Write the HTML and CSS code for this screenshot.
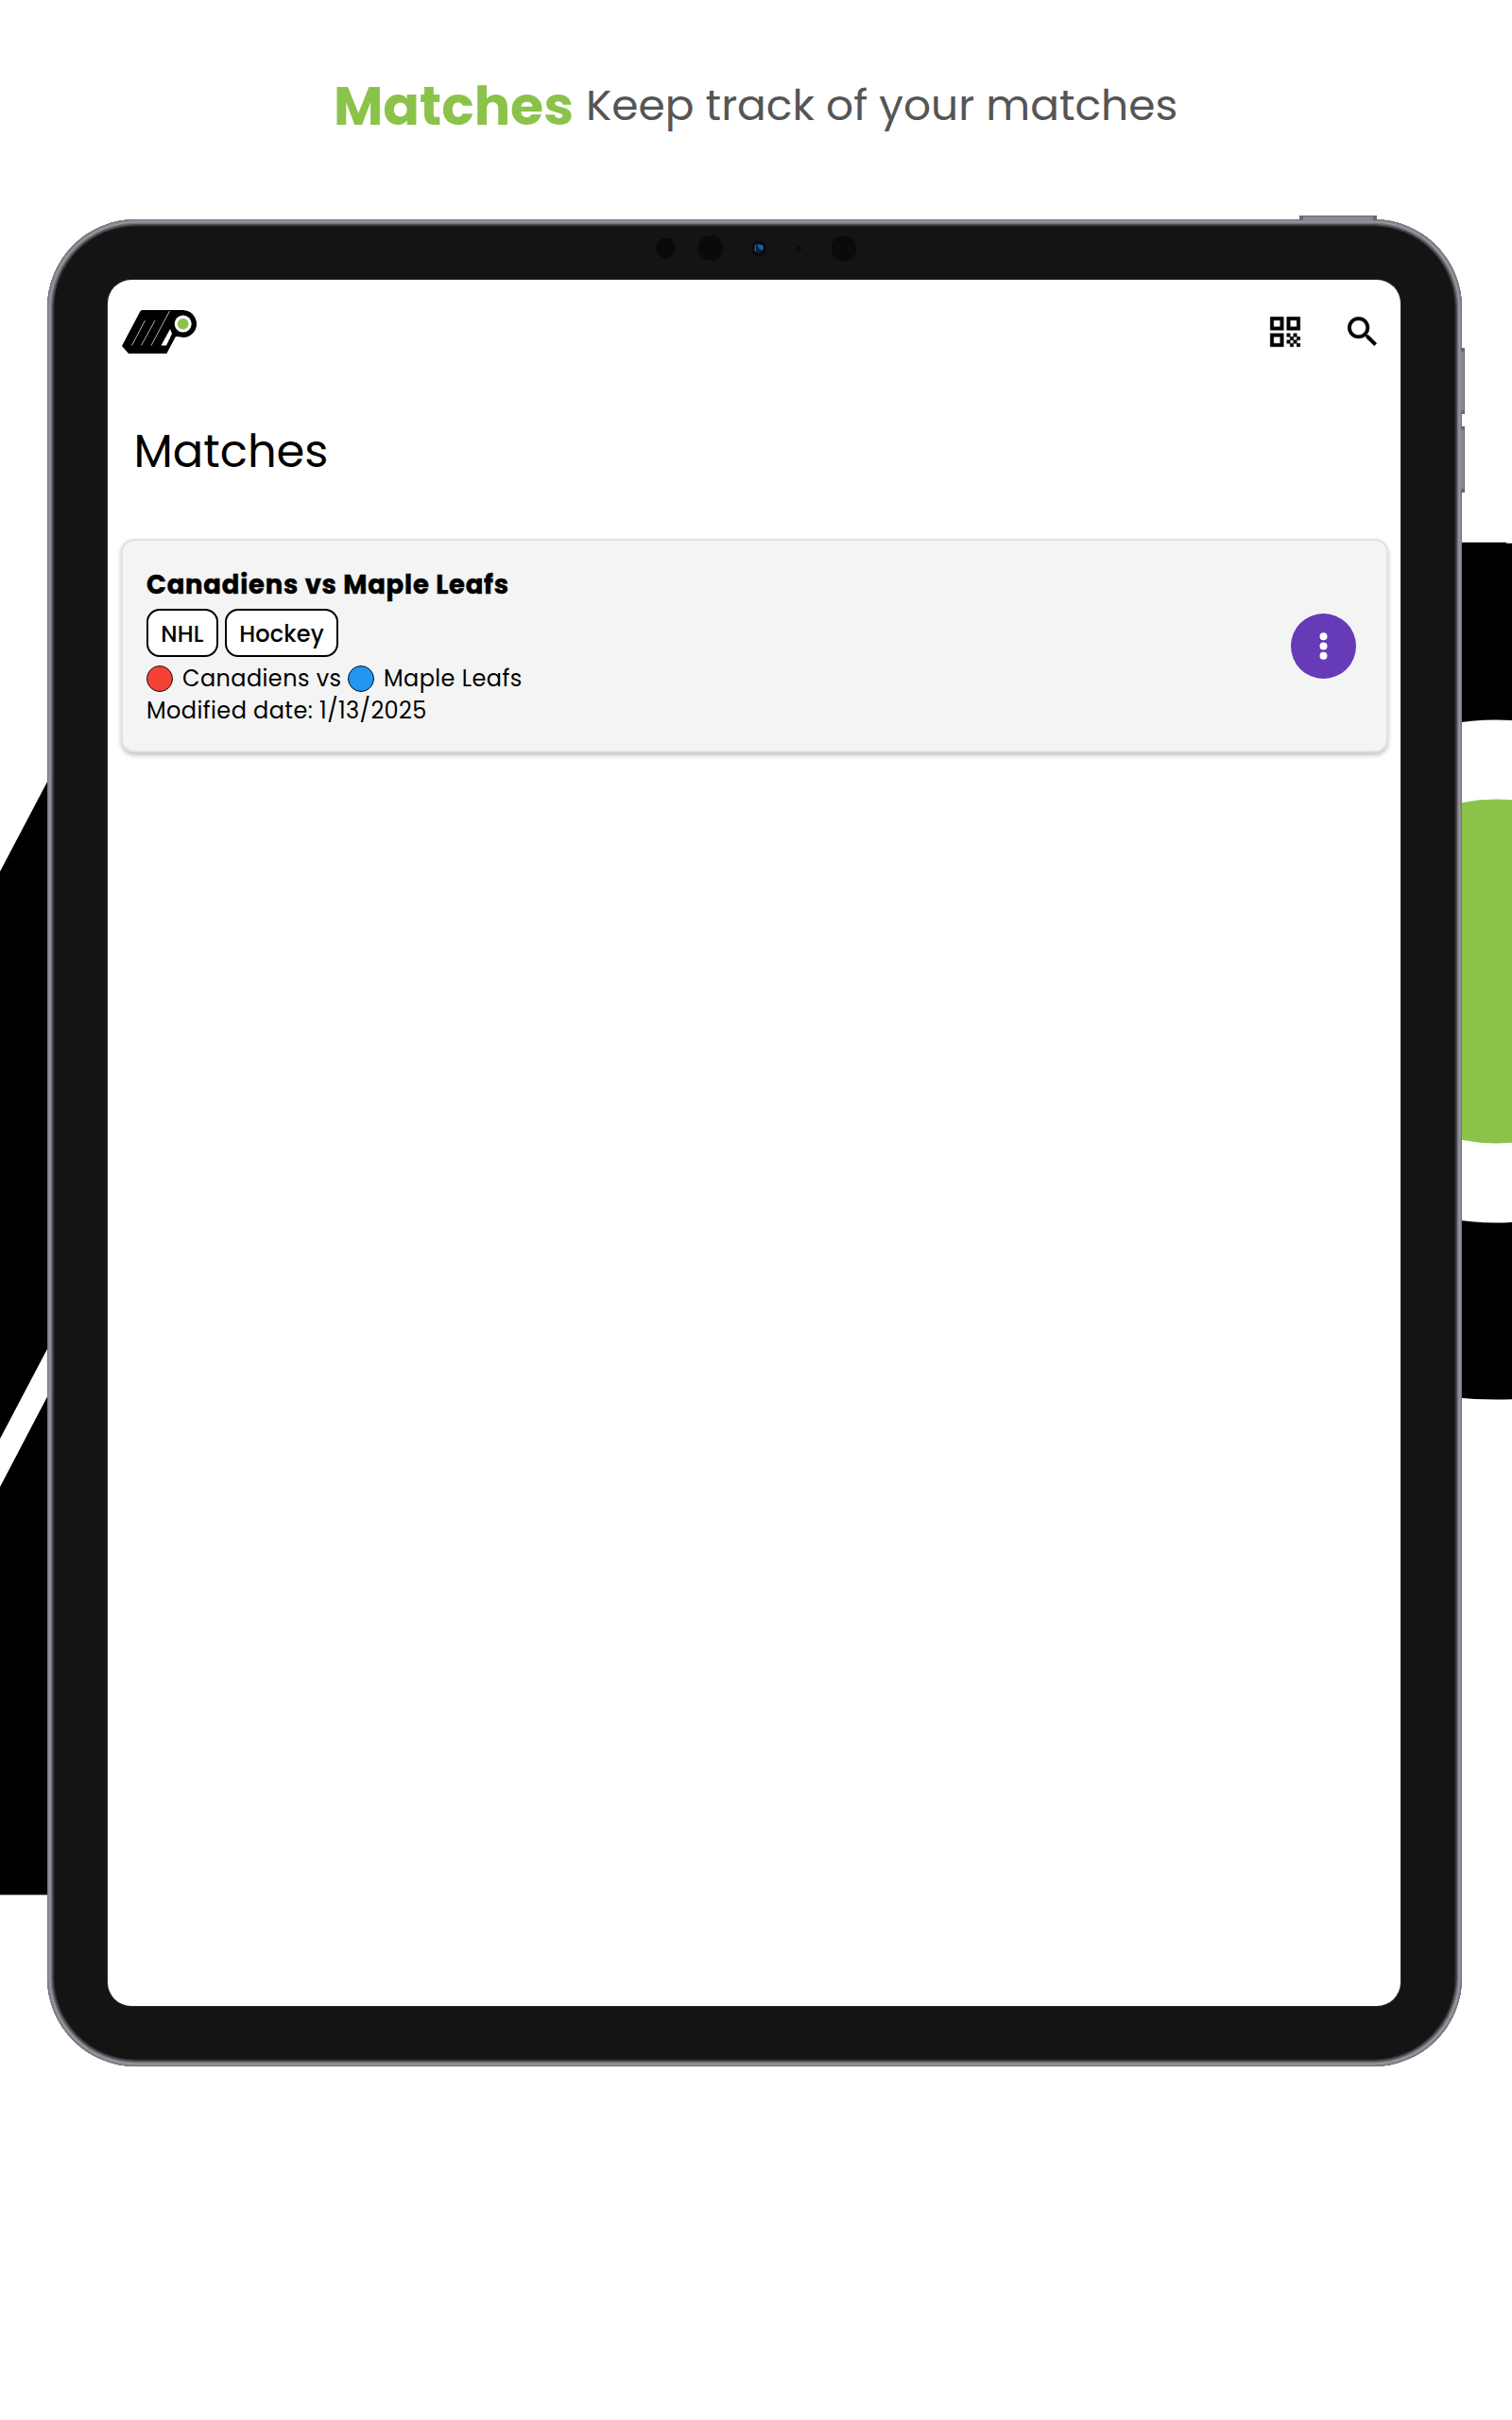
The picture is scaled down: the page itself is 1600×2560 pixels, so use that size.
FILE: index.html
```html
<!DOCTYPE html>
<html lang="en">
<head>
<meta charset="utf-8">
<title>Matches</title>
<link rel="stylesheet" href="styles.css">
</head>
<body>
<main class="page">
  <svg class="backdrop" viewBox="0 0 1600 2560" aria-hidden="true">
    <path d="M0 922 50 827 120 694V1294L50 1427 0 1522Z"/>
    <path d="M0 1573 50 1477.500 120 1344V2004.500H0Z"/>
    <path d="M1400 573.700H1594V800H1400Z"/>
    <circle cx="1583" cy="1027.500" r="453"/>
    <circle cx="1583" cy="1027.500" r="266" fill="#fff"/>
    <circle cx="1583" cy="1027.500" r="182" fill="#8bc34a"/>
  </svg>
  <header class="headline">
    <strong class="headline-name">Matches</strong>
    <span class="headline-text">Keep track of your matches</span>
  </header>
  <section class="tablet">
    <i class="key key-power"></i>
    <i class="key key-up"></i>
    <i class="key key-down"></i>
    <svg class="sensors" viewBox="0 0 240 40" aria-hidden="true">
      <g fill="#0a0a0a">
        <circle cx="24.500" cy="20.500" r="10.700"/><circle cx="72" cy="20.500" r="13.400"/>
        <circle cx="165.500" cy="20.500" r="2.700"/><circle cx="213" cy="20.500" r="13.400"/>
        <circle cx="123" cy="21" r="8"/>
      </g>
      <circle cx="122.500" cy="20.700" r="5.300" fill="#0c1c3c"/>
      <path d="M119.500 17v7M122 17l5 1v4l-3-1z" stroke="#235f9e" stroke-width="1.200" fill="#235f9e"/>
    </svg>
    <div class="screen">
      <nav class="topbar">
        <svg class="logo" viewBox="0 0 79 46" role="img" aria-label="MP">
          <path d="M21.500 0H66v28.500H57L47.500 46H7L0 38 19 2Q20 0 21.500 0Z"/>
          <circle cx="64.700" cy="14.600" r="14.400"/>
          <path d="M66 29v17H47.500L57 28Z" fill="#fff"/>
          <circle cx="64.700" cy="14.600" r="9" fill="#fff"/>
          <circle cx="64.700" cy="14.600" r="5.900" fill="#8bc34a"/>
          <path d="M51 20 53 25 47 37.500H41.500Z" fill="#fff"/>
          <path d="M24.500 11 10.500 37.500M35 11 20.500 37.500M50.500 1 31 37.500" fill="none" stroke="#fff" stroke-width=".7"/>
        </svg>
        <div class="actions">
          <svg class="icon" viewBox="0 0 24 24" aria-label="Scan code"><path d="M3 11h8V3H3zm2-6h4v4H5zM3 21h8v-8H3zm2-6h4v4H5zM13 3v8h8V3zm6 6h-4V5h4zM19 19h2v2h-2zM13 13h2v2h-2zM15 15h2v2h-2zM13 17h2v2h-2zM15 19h2v2h-2zM17 17h2v2h-2zM17 13h2v2h-2zM19 15h2v2h-2z"/></svg>
          <svg class="icon" viewBox="0 0 24 24" aria-label="Search"><path d="M15.500 14h-.79l-.28-.27A6.471 6.471 0 0 0 16 9.500 6.500 6.500 0 1 0 9.500 16c1.610 0 3.090-.59 4.230-1.570l.27.28v.79l5 4.990L20.490 19zm-6 0C7.010 14 5 11.990 5 9.500S7.010 5 9.500 5 14 7.010 14 9.500 11.990 14 9.500 14"/></svg>
        </div>
      </nav>
      <h1 class="title">Matches</h1>
      <article class="card">
        <div class="details">
          <h2 class="match-name">Canadiens vs Maple Leafs</h2>
          <div class="chips"><span class="chip chip-league">NHL</span><span class="chip chip-sport">Hockey</span></div>
          <div class="teams"><i class="dot red"></i><span class="home">Canadiens vs</span><i class="dot blue"></i><span class="away">Maple Leafs</span></div>
          <div class="modified">Modified date: 1/13/2025</div>
        </div>
        <button class="more" aria-label="More">
          <svg viewBox="0 0 69 69"><g fill="#fff"><circle cx="34.500" cy="24.200" r="4"/><circle cx="34.500" cy="34.500" r="4"/><circle cx="34.500" cy="44.800" r="4"/></g></svg>
        </button>
      </article>
    </div>
  </section>
</main>
</body>
</html>
```
FILE: styles.css
```css
* { box-sizing: border-box; }
body { margin: 0; background: #fff; color: #000; font-family: Poppins, Inter, sans-serif; }
svg { display: block; }
.page { position: relative; width: 1600px; height: 2560px; overflow: hidden; }
.backdrop { position: absolute; inset: 0; width: 1600px; height: 2560px; }
.headline { position: relative; display: flex; height: 232px; padding: 0 0 0 353px; white-space: nowrap; }
.headline-name { width: 267px; padding-top: 76px; font-size: 57px; line-height: 72px; font-weight: 700; color: #8bc34a; }
.headline-text { padding-top: 81px; font-size: 45.500px; line-height: 60px; color: #555; }

.tablet {
  position: relative; width: 1497px; height: 1953.500px; margin-left: 50px; padding: 64px 65px 64px 64px;
  border-radius: 94px; background: #141414;
  box-shadow: inset 0 0 0 1px #77777c, inset 0 0 0 2.500px #898b92, inset 0 0 0 3.500px #9da0a8, inset 0 0 0 5px #74757b, inset 0 0 0 6.500px #4b4b4f, inset 0 0 0 7.500px #2a2a2c;
}
.key { position: absolute; background: #898b92; border: 1px solid #68686d; }
.key-power { left: 1325px; top: -4px; width: 82px; height: 5px; border-width: 1px 4px 0; }
.key-up, .key-down { left: 1496px; width: 4px; height: 70px; border-width: 4px 1px 4px 0; }
.key-up { top: 136px; }
.key-down { top: 219px; }
.sensors { position: absolute; left: 630px; top: 10px; width: 240px; height: 40px; }

.screen { height: 1825.500px; border-radius: 25px; background: #fff; padding: 32px 14px 0; box-shadow: 0 0 0 1px #252b29; }
.topbar { display: flex; justify-content: space-between; height: 110px; padding: 0 5.500px 0 1px; }
.logo { width: 79px; height: 46px; }
.actions { display: flex; gap: 40px; padding-top: 2px; }
.icon { width: 42px; height: 42px; }
.icon path { stroke: #000; stroke-width: .25; }
.title { margin: 0; padding-left: 13.500px; height: 132px; font-size: 48px; line-height: 80px; font-weight: 400; }

.card {
  display: flex; justify-content: space-between; align-items: center; width: 1341px; height: 226px; padding: 1px 32px 0 25px;
  border: 2px solid #e2e2e2; border-radius: 14px; background: #f4f4f4; box-shadow: 0 3px 5px rgba(0, 0, 0, .24);
}
.details { height: 171px; white-space: nowrap; font-size: 24px; letter-spacing: .4px; }
.match-name { margin: 0; height: 46px; font-size: 27.400px; line-height: 42px; font-weight: 700; letter-spacing: .8px; -webkit-text-stroke: .5px #000; }
.chips { display: flex; gap: 7px; height: 60px; letter-spacing: .15px; }
.chip { height: 51px; border: 2px solid #000; border-radius: 14px; background: #fff; line-height: 49px; text-align: center; font-weight: 500; }
.chip-league { width: 76px; }
.chip-sport { width: 120px; }
.teams { display: flex; height: 28px; align-items: center; line-height: 30px; }
.dot { width: 28px; height: 28px; border: 1.500px solid #111; border-radius: 50%; }
.red { background: #f44336; }
.blue { background: #2196f3; }
.home { width: 185px; padding-left: 10px; }
.away { padding-left: 10px; }
.modified { line-height: 40px; }
.more { width: 69px; height: 69px; padding: 0; border: 0; border-radius: 50%; background: #673ab7; }
```
